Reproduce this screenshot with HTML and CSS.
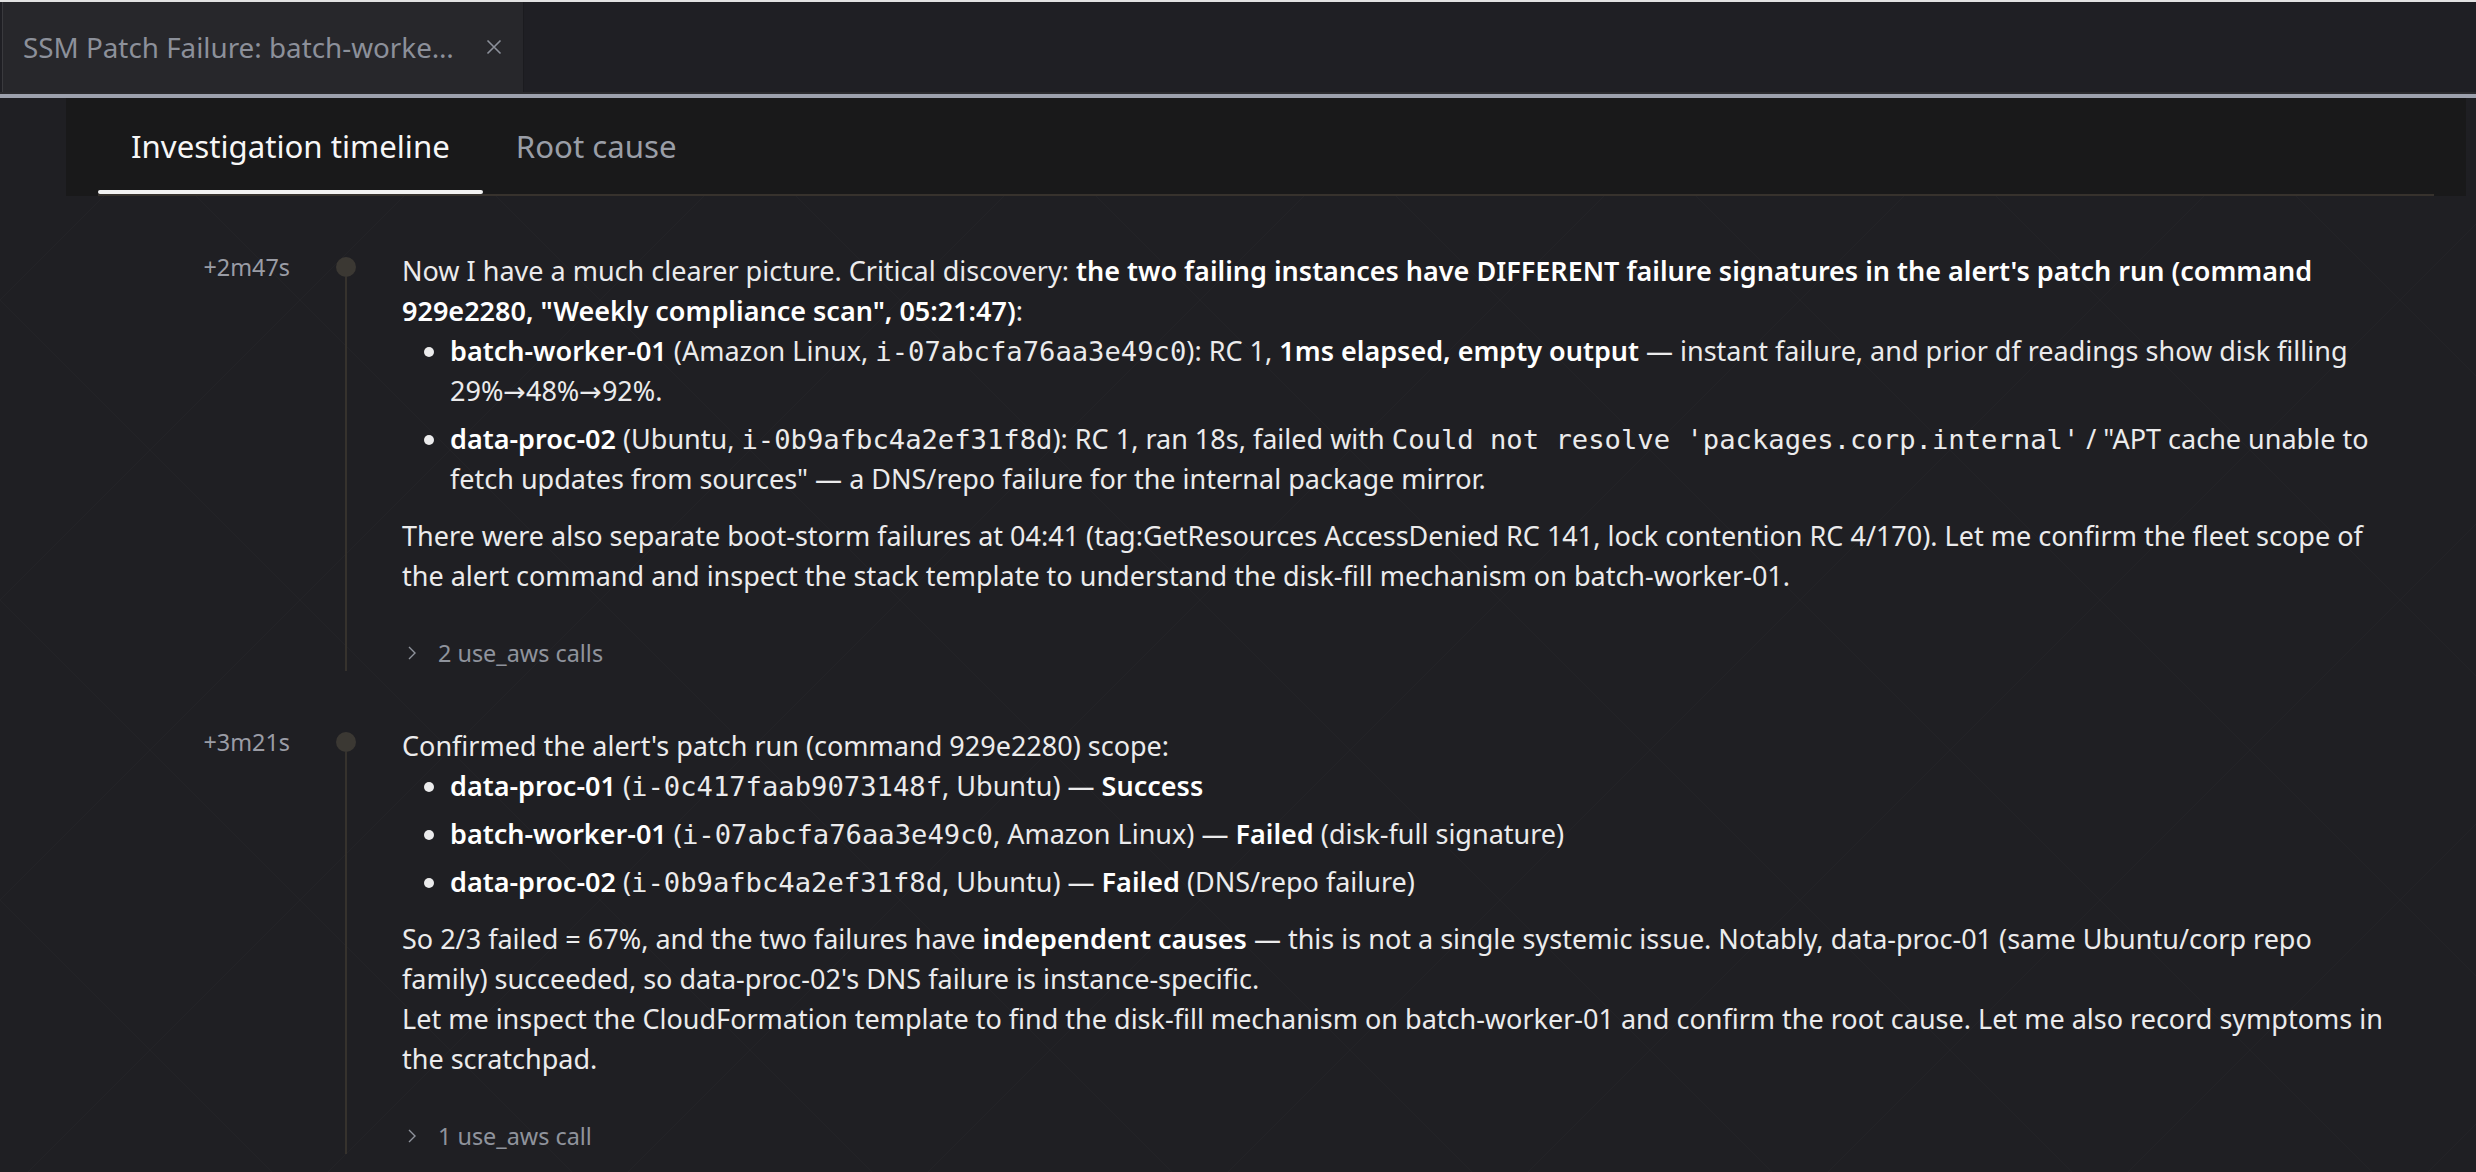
FILE: index.html
```html
<!DOCTYPE html>
<html lang="en">
<head>
<meta charset="utf-8">
<title>SSM Patch Failure</title>
<link rel="stylesheet" href="styles.css">
</head>
<body>
<div class="top-strip"></div>
<header class="tabbar">
  <div class="doc-tab">
    <span class="doc-tab-title">SSM Patch Failure: batch-worke…</span>
    <svg class="doc-tab-close" width="16" height="16" viewBox="0 0 16 16"><path d="M1.5 1.5 L14.5 14.5 M14.5 1.5 L1.5 14.5" stroke="#8c909a" stroke-width="1.6" fill="none"/></svg>
  </div>
</header>
<div class="tabbar-line"></div>

<section class="panel">
  <nav class="tabs">
    <div class="tab active">Investigation timeline</div>
    <div class="tab">Root cause</div>
  </nav>
</section>

<main class="timeline">
  <article class="entry">
    <div class="time">+2m47s</div>
    <div class="rail"><span class="dot"></span><span class="rail-line"></span></div>
    <div class="content">
      <p>Now I have a much clearer picture. Critical discovery: <strong>the two failing instances have DIFFERENT failure signatures in the alert's patch run (command 929e2280, "Weekly compliance scan", 05:21:47)</strong>:</p>
      <ul>
        <li><strong>batch-worker-01</strong> (Amazon Linux, <code>i-07abcfa76aa3e49c0</code>): RC 1, <strong>1ms elapsed, empty output</strong> — instant failure, and prior df readings show disk filling 29%<span class="arrow">→</span>48%<span class="arrow">→</span>92%.</li>
        <li><strong>data-proc-02</strong> (Ubuntu, <code>i-0b9afbc4a2ef31f8d</code>): RC 1, ran 18s, failed with <code>Could not resolve 'packages.corp.internal'</code> / "APT cache unable to fetch updates from sources" — a DNS/repo failure for the internal package mirror.</li>
      </ul>
      <p>There were also separate boot-storm failures at 04:41 (tag:GetResources AccessDenied RC 141, lock contention RC 4/170). Let me confirm the fleet scope of the alert command and inspect the stack template to understand the disk-fill mechanism on batch-worker-01.</p>
      <div class="calls">
        <svg width="16" height="16" viewBox="0 0 16 16"><path d="M7 2 L13 8 L7 14" stroke="#8f939c" stroke-width="1.4" fill="none"/></svg>
        <span>2 use_aws calls</span>
      </div>
    </div>
  </article>

  <article class="entry">
    <div class="time">+3m21s</div>
    <div class="rail"><span class="dot"></span><span class="rail-line"></span></div>
    <div class="content">
      <p>Confirmed the alert's patch run (command 929e2280) scope:</p>
      <ul>
        <li><strong>data-proc-01</strong> (<code>i-0c417faab9073148f</code>, Ubuntu) — <strong>Success</strong></li>
        <li><strong>batch-worker-01</strong> (<code>i-07abcfa76aa3e49c0</code>, Amazon Linux) — <strong>Failed</strong> (disk-full signature)</li>
        <li><strong>data-proc-02</strong> (<code>i-0b9afbc4a2ef31f8d</code>, Ubuntu) — <strong>Failed</strong> (DNS/repo failure)</li>
      </ul>
      <p>So 2/3 failed = 67%, and the two failures have <strong>independent causes</strong> — this is not a single systemic issue. Notably, data-proc-01 (same Ubuntu/corp repo family) succeeded, so data-proc-02's DNS failure is instance-specific.<br>Let me inspect the CloudFormation template to find the disk-fill mechanism on batch-worker-01 and confirm the root cause. Let me also record symptoms in the scratchpad.</p>
      <div class="calls">
        <svg width="16" height="16" viewBox="0 0 16 16"><path d="M7 2 L13 8 L7 14" stroke="#8f939c" stroke-width="1.4" fill="none"/></svg>
        <span>1 use_aws call</span>
      </div>
    </div>
  </article>
</main>
</body>
</html>
```

FILE: styles.css
```css
html, body {
  margin: 0;
  padding: 0;
}

body {
  background-color: #1f1f23;
  background-image:
    linear-gradient(45deg, transparent 49.85%, rgba(255, 255, 255, 0.018) 50%, transparent 50.15%),
    linear-gradient(-45deg, transparent 49.85%, rgba(255, 255, 255, 0.018) 50%, transparent 50.15%);
  background-size: 300px 300px;
  font-family: "Noto Sans", "Open Sans", sans-serif;
  color: #ebebec;
  height: 1172px;
  overflow: hidden;
}

.top-strip {
  height: 2px;
  background: #e2e2e2;
}

.tabbar {
  display: flex;
  height: 90px;
  background: #1f1f24;
  border-bottom: 2px solid #2a2a2d;
}

.doc-tab {
  display: flex;
  align-items: center;
  gap: 30px;
  width: 522px;
  box-sizing: border-box;
  margin-left: 2px;
  padding: 0 21px 0 20px;
  background: #27272b;
  border-left: 1px solid #3a3a3e;
  border-right: 1px solid #1b1b1f;
}

.doc-tab-title {
  flex: 1;
  font-size: 27.8px;
  color: #8c909a;
  white-space: nowrap;
  overflow: hidden;
}

.doc-tab-close {
  flex: none;
}

.tabbar-line {
  height: 4px;
  background: #9da1ad;
}

.panel {
  margin: 0 10px 0 66px;
  padding: 0 32px;
  background: #19191a;
}

.tabs {
  display: flex;
  border-bottom: 2px solid #37322d;
}

.tab {
  position: relative;
  padding: 25px 33px 24px;
  font-size: 31.2px;
  line-height: 1.5;
  color: #9a9ea7;
  white-space: nowrap;
}

.tab.active {
  color: #f7f7f7;
}

.tab.active::after {
  content: "";
  position: absolute;
  left: 0;
  right: 0;
  bottom: 0;
  height: 4px;
  border-radius: 2px;
  background: #f2f2f2;
}

.timeline {
  display: flex;
  flex-direction: column;
  gap: 55px;
  padding: 55px 76px 0 0;
}

.entry {
  display: grid;
  grid-template-columns: 290px 112px minmax(0, 1fr);
}

.time {
  text-align: right;
  font-size: 23.4px;
  line-height: 32px;
  color: #9a9ca5;
}

.rail {
  display: flex;
  flex-direction: column;
  align-items: center;
}

.dot {
  flex: none;
  width: 20px;
  height: 20px;
  margin-top: 6px;
  border-radius: 50%;
  background: #3b3833;
}

.rail-line {
  flex: 1;
  width: 2px;
  background: #36322d;
}

.content {
  font-size: 27px;
  line-height: 40px;
}

.content p {
  margin: 0;
}

.content ul {
  margin: 0 0 17px;
  padding-left: 48px;
}

.content li + li {
  margin-top: 8px;
}

.content strong {
  font-weight: 600;
  color: #ffffff;
}

.content code {
  font-family: "DejaVu Sans Mono", "Liberation Mono", monospace;
  font-size: 27.2px;
  line-height: 1;
}

.arrow {
  font-family: "DejaVu Sans", sans-serif;
  line-height: 1;
}

.calls {
  display: flex;
  align-items: center;
  gap: 20px;
  margin-top: 40px;
  font-size: 23.4px;
  line-height: 1.5;
  color: #8f939c;
}

.calls svg {
  flex: none;
}
```
